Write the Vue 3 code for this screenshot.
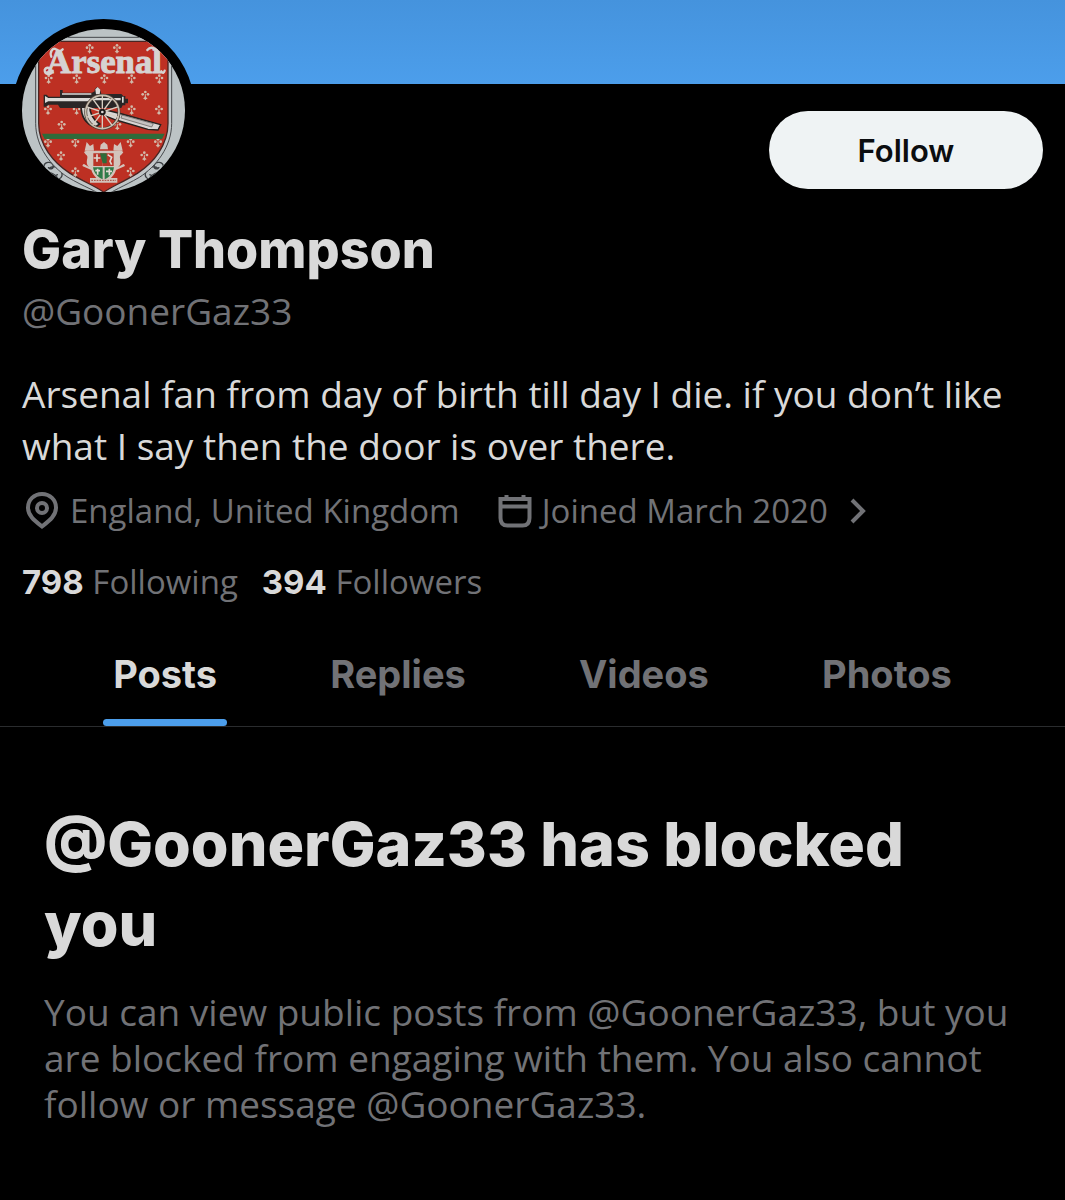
<template>
  <div class="profile">
    <div class="banner"></div>

    <header class="profile-header">
      <div class="top-row">
        <div class="avatar">
          <svg viewBox="66 87 489 489" role="img" aria-label="Profile picture">
            <rect x="66" y="87" width="489" height="489" fill="#bcc3c5" />
            <!-- scrolls beside the shield -->
            <g fill="none" stroke="#3c4043" stroke-width="4">
              <path d="M132 500c0-14 22-18 27-5s-13 15-14 6M146 506c14-12 34-4 39 10s-5 22-13 20-6-12 2-12M150 518c10 2 22 12 26 22" />
              <path d="M490 500c0-14-22-18-27-5s13 15 14 6M476 506c-14-12-34-4-39 10s5 22 13 20 6-12-2-12M472 518c-10 2-22 12-26 22" />
            </g>
            <path
              d="M107 112H515V370C515 440 468 500 418 532C370 560 335 572 312 592C290 572 250 560 204 532C154 500 107 440 107 370Z"
              fill="#c0c6c8" stroke="#45484b" stroke-width="3"
            />
            <path
              d="M116 124H504V370C504 434 462 488 412 520C366 548 334 560 311 577C290 560 256 548 210 520C160 488 116 434 116 370Z"
              fill="#bd3023" stroke="#4a2522" stroke-width="4"
            />
            <g fill="#d2b9a9">
              <g v-for="(m, i) in marks" :key="i" :transform="`translate(${m[0]} ${m[1]})`">
                <circle cx="0" cy="-9" r="4" />
                <circle cx="-8" cy="-2" r="4" />
                <circle cx="8" cy="-2" r="4" />
                <path d="M-1-3h2l1 9 5 5-4 1-3 4-3-4-4-1 5-5z" />
              </g>
            </g>
            <path d="M126 401H494L486 417H134Z" fill="#2f6b3a" />
            <text class="crest-name" x="139" y="220">Arsenal</text>
            <g fill="none" stroke="#d6d3d2" stroke-width="7" stroke-linecap="round">
              <path d="M154 170c-6-14 4-28 14-22 8 4 12 8 20 0M134 210c0 16 20 16 24 2M134 210c4-10 16-8 18 0" />
              <path d="M442 150c8-10 20-8 28 0M484 214c5 8 8 4 10-2" />
            </g>
            <!-- cannon -->
            <path d="M243 316c0 34 14 56 42 66l14-10c-22-14-30-30-30-56z" fill="#d2cfcd" stroke="#25211f" stroke-width="5" />
            <path d="M318 330l48 12 116 32-8 16-30-2-96-28-36-14z" fill="#d8d5d3" stroke="#25211f" stroke-width="4" />
            <path d="M366 345l94 26-5 10-92-27z" fill="#c5c2c0" stroke="#5b5654" stroke-width="2" />
            <path d="M131 284h9l6 6h34v-20h8v8h88l8-4v-6l8-8 8 8 4 14h60l6 6h6v8h8v14h-8v6h-8l-4 8H180l-6-10h-28l-8 6h-7z" fill="#2a2626" />
            <path d="M135 288l10 6h130v10H145l-10 5zM186 280h88v4h-88zM278 294h84v7h-84zM366 290h5v18h-5z" fill="#dcd9d7" />
            <path d="M286 268l7-7 8 8-2 14h-11z" fill="#dcd9d7" />
            <circle cx="307" cy="336" r="50" fill="none" stroke="#4e4239" stroke-width="9" />
            <circle cx="307" cy="336" r="50" fill="none" stroke="#c8beb0" stroke-width="5" />
            <g stroke="#d8cfc3" stroke-width="4">
              <line
                v-for="angle in spokes" :key="angle"
                x1="307" y1="336" x2="307" y2="287"
                :transform="`rotate(${angle} 307 336)`"
              />
            </g>
            <circle cx="307" cy="336" r="10" fill="#1d1a1a" />
            <circle cx="307" cy="336" r="4" fill="#dcd9d7" />
            <!-- small arms -->
            <g fill="#d3c3bb">
              <path d="M254 452l6-26 10 12 10-6 2 20zM368 452l-6-26-10 12-10-6-2 20zM300 448l2-14 10-8 10 8 2 14z" />
              <path d="M252 456c14-10 24 0 32-4h54c8 4 20-6 32 4-4 10-12 8-10 18s4 20-6 28l16-10c6 2 6 8 0 8l-22 10c-6 18-20 32-37 36-17-4-31-18-37-36l-22-10c-6 0-6-6 0-8l16 10c-10-8-8-18-6-28s-6-8-10-18z" />
              <path d="M270 534h82v14h-82z" />
            </g>
            <path d="M280 460h28v38h-28z" fill="#b93428" />
            <path d="M308 460h33v38h-33z" fill="#b93428" />
            <path d="M300 460h20v30h-12z" fill="#2f6b3a" />
            <path d="M279 502h29v36c-14-5-26-18-29-36zM314 502h28c-3 18-14 31-28 36z" fill="#2f7a48" />
            <path d="M291 463v22M281 474h20M323 464l12 8-5 12 5 10M293 506v18M286 512h14M328 506v20M318 514h18" fill="none" stroke="#e0d9d2" stroke-width="5" />
            <path d="M274 541h74" stroke="#a5483c" stroke-width="3" stroke-dasharray="5 3" />
          </svg>
        </div>
        <button type="button" class="follow-btn">Follow</button>
      </div>

      <h1 class="name">Gary Thompson</h1>
      <p class="handle">@GoonerGaz33</p>
      <p class="bio">Arsenal fan from day of birth till day I die. if you don’t like what I say then the door is over there.</p>

      <div class="meta">
        <span class="meta-item location">
          <svg class="pin" viewBox="0 0 32 38" aria-hidden="true">
            <path d="M16 2C8 2 2 8 2 15.500C2 24 9 29 16 34.500C23 29 30 24 30 15.500C30 8 24 2 16 2Z" />
            <circle cx="16" cy="16" r="5" />
          </svg>
          England, United Kingdom
        </span>
        <a href="#" class="meta-item joined">
          <svg class="calendar" viewBox="0 0 34 34" aria-hidden="true">
            <path d="M2.500 5H31.500V24C31.500 29 29 31.500 24.500 31.500H9.500C5 31.500 2.500 29 2.500 24ZM2.500 12.500H31.500M8.500 1V5M25.500 1V5" />
          </svg>
          Joined March 2020
          <svg class="chevron" viewBox="0 0 16 26" aria-hidden="true">
            <path d="M2 2L13 13L2 24" />
          </svg>
        </a>
      </div>

      <div class="stats">
        <a v-for="stat in stats" :key="stat.label" href="#">
          <strong>{{ stat.value }}</strong> {{ stat.label }}
        </a>
      </div>
    </header>

    <nav class="tabs">
      <button
        v-for="tab in tabs"
        :key="tab"
        type="button"
        :class="['tab', { active: tab === activeTab }]"
        @click="activeTab = tab"
      >{{ tab }}</button>
    </nav>

    <section class="blocked">
      <h2>@GoonerGaz33 has blocked you</h2>
      <p>You can view public posts from @GoonerGaz33, but you are blocked from engaging with them. You also cannot follow or message @GoonerGaz33.</p>
    </section>
  </div>
</template>

<script setup>
import { ref } from 'vue'

const tabs = ['Posts', 'Replies', 'Videos', 'Photos']
const activeTab = ref('Posts')

const stats = [
  { value: 798, label: 'Following' },
  { value: 394, label: 'Followers' }
]

// ermine marks on the crest
const marks = [
  [269, 145], [351, 145],
  [146, 236], [230, 236], [313, 236], [395, 236], [478, 236],
  [436, 285], [144, 329], [230, 329], [395, 329], [477, 329],
  [185, 375], [352, 375],
  [144, 427], [226, 427], [392, 427], [474, 427],
  [183, 467], [433, 467], [226, 515], [392, 515]
]

const spokes = [0, 36, 72, 108, 144, 180, 216, 252, 288, 324]
</script>

<style>
body {
  margin: 0;
  background: #000;
}
</style>

<style scoped>
.profile {
  min-height: 100vh;
  background: #000;
  color: #d9d9d9;
  font-family: "Open Sans", "Noto Sans", sans-serif;
  font-size: 37px;
}

h1,
h2,
p {
  margin: 0;
}

a {
  color: inherit;
  text-decoration: none;
}

button {
  border: 0;
  cursor: pointer;
  font-family: Inter, sans-serif;
}

.banner {
  height: 84px;
  background: linear-gradient(#4593dd, #4c9eeb);
}

.profile-header {
  padding: 0 22px;
}

.top-row {
  display: flex;
  justify-content: space-between;
  align-items: flex-start;
}

.avatar {
  width: 163px;
  height: 163px;
  margin: -65px 0 0 -10px;
  border: 10px solid #000;
  border-radius: 50%;
  background: #000;
}

.avatar svg {
  display: block;
  width: 100%;
  height: 100%;
  border-radius: 50%;
}

.crest-name {
  fill: #d6d3d2;
  stroke: #d6d3d2;
  stroke-width: 3px;
  font-family: "Liberation Serif", serif;
  font-size: 104px;
  font-weight: 700;
}

.follow-btn {
  width: 274px;
  height: 78px;
  margin-top: 27px;
  border-radius: 39px;
  background: #eff3f4;
  color: #0b0d0f;
  font-size: 31px;
  font-weight: 600;
}

.name {
  margin-top: 16px;
  font-family: Inter, sans-serif;
  font-size: 52px;
  font-weight: 800;
  line-height: 64px;
}

.handle {
  margin-top: 3px;
  color: #717276;
  line-height: 52px;
}

.bio {
  margin-top: 31px;
  line-height: 52px;
}

.meta {
  display: flex;
  align-items: center;
  gap: 38px;
  margin-top: 15px;
  color: #717276;
  font-size: 33px;
  line-height: 48px;
}

.meta-item {
  display: flex;
  align-items: center;
}

.meta svg {
  flex: none;
  fill: none;
  stroke: currentColor;
  stroke-width: 4;
}

.pin {
  width: 32px;
  height: 38px;
  margin: 0 12px 0 4px;
}

.calendar {
  width: 34px;
  height: 34px;
  margin-right: 10px;
}

.chevron {
  width: 16px;
  height: 26px;
  margin-left: 22px;
}

.stats {
  display: flex;
  gap: 24px;
  margin-top: 23px;
  color: #717276;
  font-size: 33px;
  line-height: 48px;
}

.stats strong {
  color: #d9d9d9;
  font-family: Inter, sans-serif;
  font-weight: 700;
}

.tabs {
  display: flex;
  justify-content: space-evenly;
  margin-top: 15px;
  border-bottom: 1px solid #2a2c2e;
}

.tab {
  position: relative;
  height: 105px;
  padding: 0;
  background: none;
  color: #717276;
  font-size: 38px;
  font-weight: 700;
}

.tab.active {
  color: #d9d9d9;
}

.tab.active::after {
  content: "";
  position: absolute;
  right: -10px;
  bottom: 0;
  left: -10px;
  height: 7px;
  border-radius: 4px;
  background: #4c9eeb;
}

.blocked {
  padding: 77px 44px 64px;
}

.blocked h2 {
  font-family: Inter, sans-serif;
  font-size: 61px;
  font-weight: 800;
  line-height: 80px;
}

.blocked p {
  margin-top: 25px;
  color: #717276;
  line-height: 46px;
}
</style>
